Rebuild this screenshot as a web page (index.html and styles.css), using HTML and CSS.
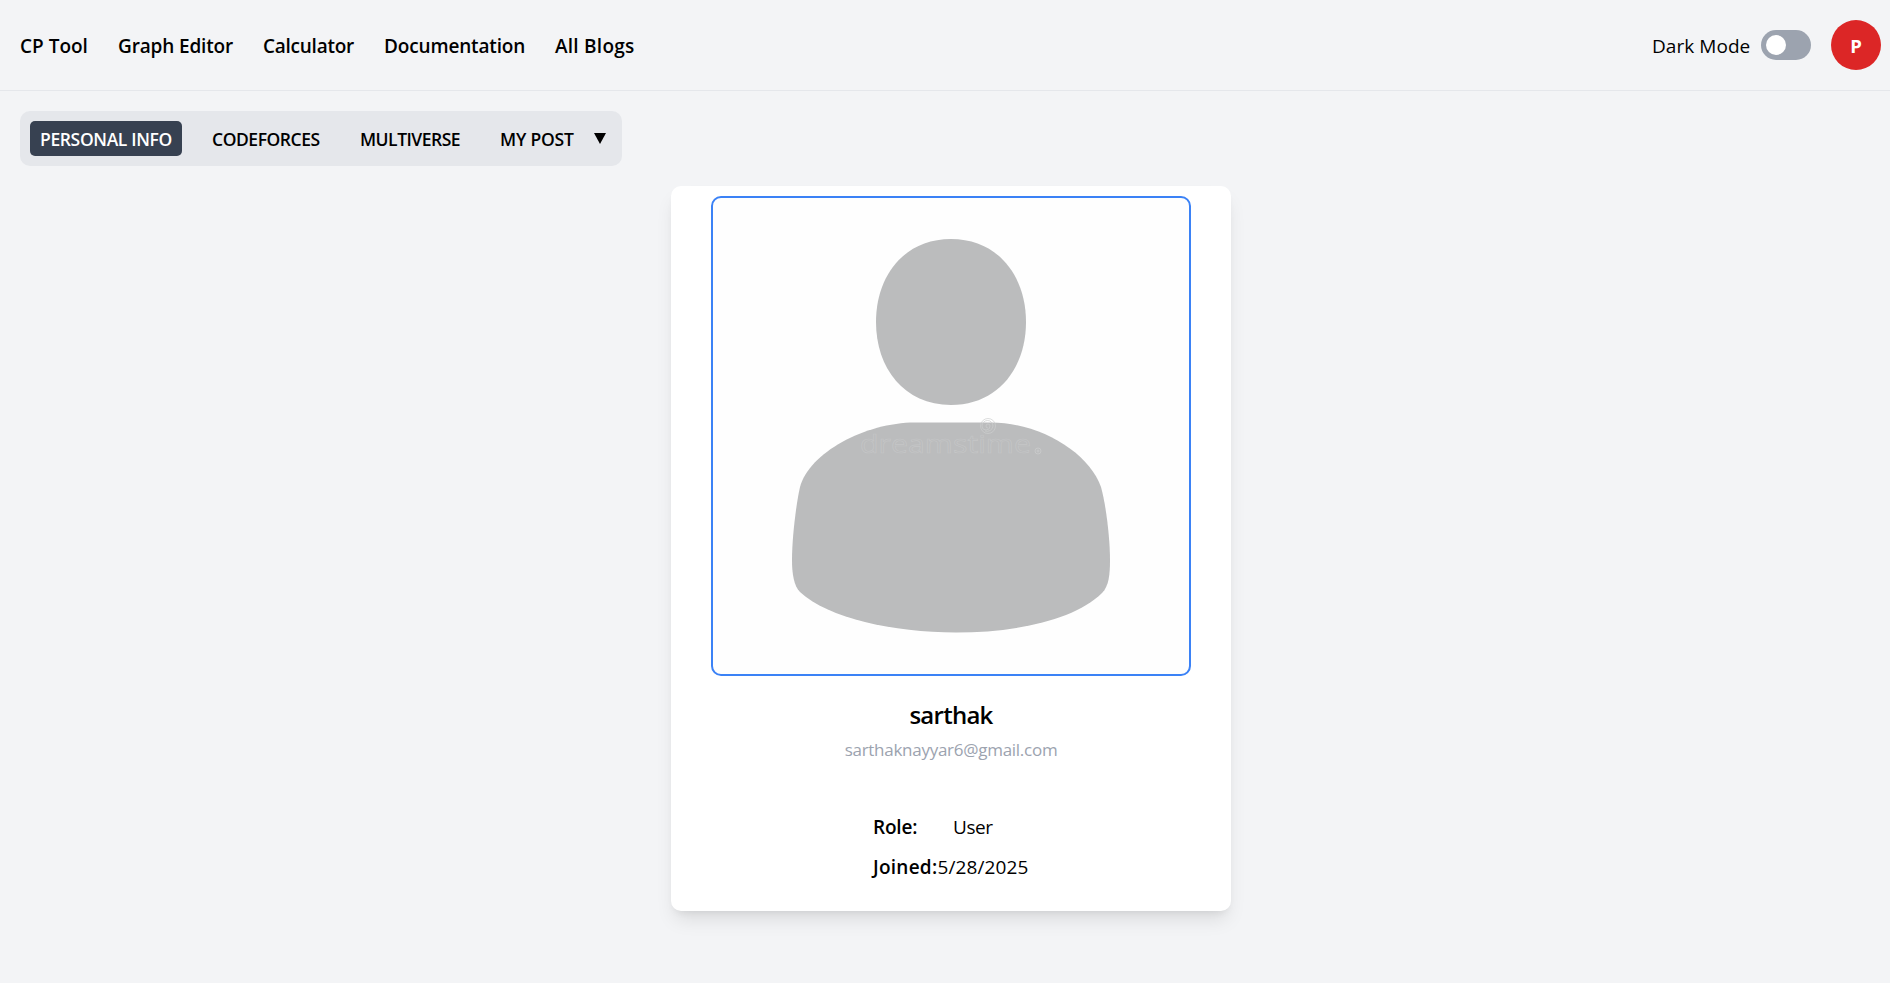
FILE: index.html
```
<!DOCTYPE html>
<html lang="en">
<head>
<meta charset="utf-8">
<title>Profile</title>
<link rel="stylesheet" href="styles.css">
</head>
<body>
<header class="header">
  <nav class="nav">
    <a class="nav-cp">CP Tool</a>
    <a class="nav-graph">Graph Editor</a>
    <a class="nav-calc">Calculator</a>
    <a class="nav-docs">Documentation</a>
    <a class="nav-blogs">All Blogs</a>
  </nav>
  <div class="actions">
    <span class="mode-label">Dark Mode</span>
    <span class="toggle"><span class="knob"></span></span>
    <span class="avatar">P</span>
  </div>
</header>
<main>
  <div class="tabs">
    <a class="tab tab-active tab-info">PERSONAL INFO</a>
    <a class="tab tab-cf">CODEFORCES</a>
    <a class="tab tab-multi">MULTIVERSE</a>
    <a class="tab tab-post">MY POST</a>
    <svg class="caret" viewBox="0 0 12 11"><path d="M0 0H12L6 11Z"/></svg>
  </div>
  <section class="card">
    <div class="photo">
      <svg viewBox="0 0 476 476">
        <g fill="#bbbcbd">
          <path d="M238 41C285 41 313 78 313 124C313 170 285 207 238 207C191 207 163 170 163 124C163 78 191 41 238 41Z"/>
          <path d="M202 224.500H278C328 224.500 376 255 388 289C393 307 397 340 397 362C397 376 396 388 389 395C362 422 302 434.500 243 434.500C180 434.500 115 420 87 394C81 388 79 376 79 362C79 340 83 307 87 289C96 255 152 224.500 202 224.500Z"/>
        </g>
        <text class="watermark" x="147" y="255" textLength="171" lengthAdjust="spacingAndGlyphs">dreamstime</text>
        <g class="swirl">
          <path d="M275 230a2 2 0 1 1 2-2a4 4 0 0 1-8 0a5.500 5.500 0 0 1 11 0a6 6 0 0 1-8 5"/>
          <circle cx="275" cy="228" r="7.500"/>
          <circle cx="325" cy="253" r="3"/>
          <circle cx="325" cy="253" r="1"/>
        </g>
      </svg>
    </div>
    <h1 class="name">sarthak</h1>
    <p class="email">sarthaknayyar6@gmail.com</p>
    <div class="details">
      <div class="row"><b class="role">Role:</b><span class="role-value">User</span></div>
      <div class="row"><b class="joined">Joined:</b><span class="date">5/28/2025</span></div>
    </div>
  </section>
</main>
</body>
</html>
```
FILE: styles.css
```
* { box-sizing: border-box; }
body {
  margin: 0;
  min-height: 100vh;
  background: #f3f4f6;
  color: #000;
  font-family: "Open Sans", "Noto Sans", sans-serif;
  font-size: 19px;
  line-height: 30px;
  white-space: nowrap;
}
.header {
  display: flex;
  justify-content: space-between;
  align-items: center;
  height: 91px;
  padding: 0 9px 0 20px;
  border-bottom: 1px solid #e5e7eb;
}
.nav { display: flex; gap: 30px; padding-top: 2px; font-weight: 600; letter-spacing: -.15px; }
.nav-cp { width: 68px; letter-spacing: 0; }
.nav-graph { width: 115px; }
.nav-calc { width: 91px; letter-spacing: -.25px; }
.nav-docs { width: 141px; }
.nav-blogs { letter-spacing: .25px; }
.actions { display: flex; align-items: center; }
.mode-label { width: 99px; margin-right: 10px; padding-top: 2px; letter-spacing: .05px; }
.toggle { width: 50px; height: 30px; padding: 5px; border-radius: 15px; background: #9ca3af; }
.knob { display: block; width: 20px; height: 20px; border-radius: 50%; background: #fff; }
.avatar {
  width: 50px;
  height: 50px;
  margin-left: 20px;
  border-radius: 50%;
  background: #dc2626;
  color: #fff;
  font-size: 18.5px;
  font-weight: 700;
  line-height: 52px;
  text-align: center;
}
.tabs {
  display: flex;
  align-items: center;
  gap: 20px;
  width: 602px;
  height: 55px;
  margin: 20px 0 20px 20px;
  padding: 0 10px;
  border-radius: 10px;
  background: #e5e7eb;
  font-size: 17.5px;
  font-weight: 600;
}
.tab { height: 35px; padding: 0 10px; border-radius: 5px; line-height: 37px; }
.tab-active { background: #374151; color: #fff; }
.tab-info { width: 152px; letter-spacing: -.36px; }
.tab-cf { width: 128px; letter-spacing: -.45px; }
.tab-multi { width: 120px; letter-spacing: -.5px; }
.tab-post { width: 94px; letter-spacing: -.2px; }
.caret { width: 12px; height: 11px; margin-left: -10px; }
.card {
  display: flex;
  flex-direction: column;
  align-items: center;
  width: 560px;
  height: 725px;
  margin-left: 671px;
  padding-top: 10px;
  border-radius: 10px;
  background: #fff;
  box-shadow: 0 12px 19px -4px rgba(0, 0, 0, .1), 0 5px 8px -5px rgba(0, 0, 0, .1);
}
.photo {
  width: 480px;
  height: 480px;
  border: 2px solid #3b82f6;
  border-radius: 10px;
  background: #fefefe;
  overflow: hidden;
}
.photo svg { display: block; }
.watermark {
  fill: none;
  stroke: #c5c6c7;
  stroke-width: .6px;
  font-family: "Open Sans", sans-serif;
  font-size: 26px;
}
.swirl { fill: none; stroke: #cdcecf; stroke-width: .7px; }
.name { margin: 19px 0 0; font-size: 24px; font-weight: 600; line-height: 40px; letter-spacing: -.75px; }
.email { margin: 0; color: #9ca3af; font-size: 17px; line-height: 30px; letter-spacing: -.27px; }
.details { display: flex; flex-direction: column; gap: 10px; width: 156px; margin-top: 47px; }
.row { display: flex; }
.row b { font-weight: 600; }
.role { width: 80px; letter-spacing: -.2px; }
.role-value { letter-spacing: -.4px; }
.joined { width: 64.5px; letter-spacing: .25px; }
.date { letter-spacing: .1px; }
```
